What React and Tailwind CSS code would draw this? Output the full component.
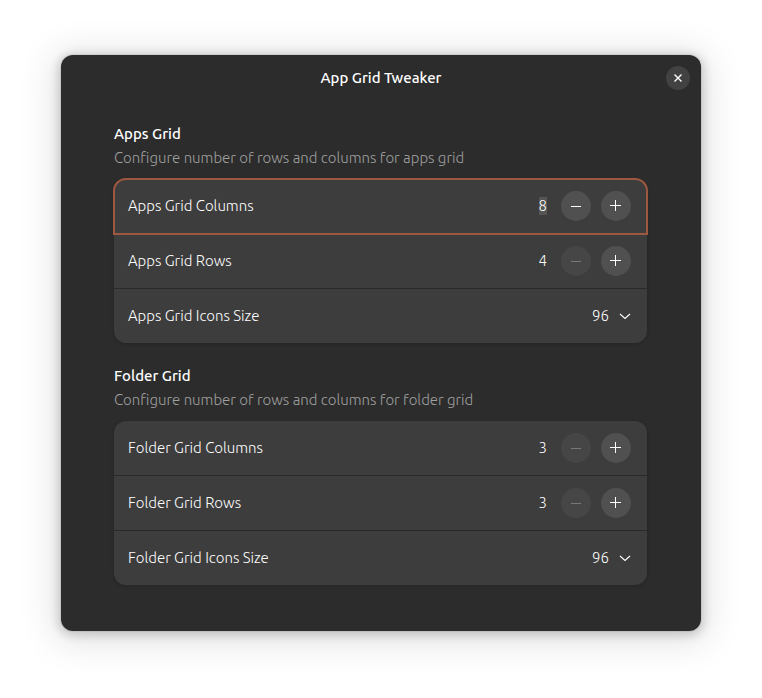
import { useState } from "react";

function Icon({ d, size = 16, className = "" }) {
  return (
    <svg
      width={size}
      height={size}
      viewBox="0 0 16 16"
      fill="none"
      stroke="currentColor"
      className={className}
      aria-hidden="true"
    >
      <path d={d} />
    </svg>
  );
}

const roundButton =
  "flex size-[30px] shrink-0 items-center justify-center rounded-full bg-[#505050] text-white disabled:bg-[#464646] disabled:text-[#787878]";

function SpinRow({ id, label, initial, min, focused }) {
  const [value, setValue] = useState(initial);
  return (
    <div
      className={
        "flex h-[55px] items-center border-b border-[#292929] pr-4 pl-[14px] " +
        (focused ? "rounded-t-xl outline-2 -outline-offset-1 outline-[#9f5840]" : "")
      }
    >
      <label htmlFor={id} className="flex-1">
        {label}
      </label>
      <input
        id={id}
        type="text"
        inputMode="numeric"
        value={value}
        onChange={(e) => setValue(Number(e.target.value) || min)}
        className={
          "mr-[14px] h-[18px] field-sizing-content text-right outline-none " +
          (focused ? "bg-[#555555]" : "bg-transparent")
        }
      />
      <button
        type="button"
        aria-label={"Decrease " + label}
        disabled={value <= min}
        onClick={() => setValue(value - 1)}
        className={roundButton + " mr-[10px]"}
      >
        <Icon d="M3 8.5H13" />
      </button>
      <button
        type="button"
        aria-label={"Increase " + label}
        onClick={() => setValue(value + 1)}
        className={roundButton}
      >
        <Icon d="M2 7.5H13M7.5 2V13" />
      </button>
    </div>
  );
}

function SelectRow({ id, label }) {
  return (
    <div className="flex h-[54px] items-center pr-4 pl-[14px]">
      <label htmlFor={id} className="flex-1">
        {label}
      </label>
      <div className="relative flex items-center">
        <select
          id={id}
          defaultValue="96"
          className="appearance-none bg-transparent pr-[22px] outline-none"
        >
          <option>32</option>
          <option>48</option>
          <option>64</option>
          <option>96</option>
        </select>
        <svg
          width="12"
          height="12"
          viewBox="0 0 12 12"
          fill="none"
          stroke="currentColor"
          strokeWidth="1.1"
          className="pointer-events-none absolute right-0"
          aria-hidden="true"
        >
          <path d="M1 4L6 8.4L11 4" />
        </svg>
      </div>
    </div>
  );
}

function Group({ title, description, name, columns, rows, min, focused }) {
  const key = name.toLowerCase();
  return (
    <section>
      <h2 className="font-medium">{title}</h2>
      <p className="text-[#a0a0a0]">{description}</p>
      <div className="mt-[9px] rounded-xl bg-[#3d3d3d] shadow-[0_1px_3px_1px_rgba(0,0,0,0.12)]">
        <SpinRow
          id={key + "-columns"}
          label={name + " Grid Columns"}
          initial={columns}
          min={min}
          focused={focused}
        />
        <SpinRow id={key + "-rows"} label={name + " Grid Rows"} initial={rows} min={min} />
        <SelectRow id={key + "-size"} label={name + " Grid Icons Size"} />
      </div>
    </section>
  );
}

export default function App() {
  return (
    <div className="min-h-screen bg-white px-[61px] pt-[55px] pb-[67px] font-['Ubuntu','Noto_Sans',sans-serif] text-[15px] leading-6 font-light text-white">
      <main className="rounded-xl bg-[#2c2c2c] pb-[46px] shadow-[0_0_0_1px_rgba(0,0,0,0.06),0_2px_10px_3px_rgba(0,0,0,0.16),0_4px_36px_8px_rgba(0,0,0,0.11)]">
        <header className="grid h-[46px] grid-cols-[1fr_auto_1fr] items-center px-[11px]">
          <h1 className="col-start-2 font-medium">App Grid Tweaker</h1>
          <button
            type="button"
            aria-label="Close"
            className="flex size-6 items-center justify-center justify-self-end rounded-full bg-[#424242]"
          >
            <Icon d="M4.5 4.5L11.5 11.5M11.5 4.5L4.5 11.5" className="stroke-[1.4]" />
          </button>
        </header>
        <div className="flex flex-col gap-[21px] pt-[21px] pr-[54px] pl-[53px]">
          <Group
            title="Apps Grid"
            description="Configure number of rows and columns for apps grid"
            name="Apps"
            columns={8}
            rows={4}
            min={4}
            focused
          />
          <Group
            title="Folder Grid"
            description="Configure number of rows and columns for folder grid"
            name="Folder"
            columns={3}
            rows={3}
            min={3}
          />
        </div>
      </main>
    </div>
  );
}
